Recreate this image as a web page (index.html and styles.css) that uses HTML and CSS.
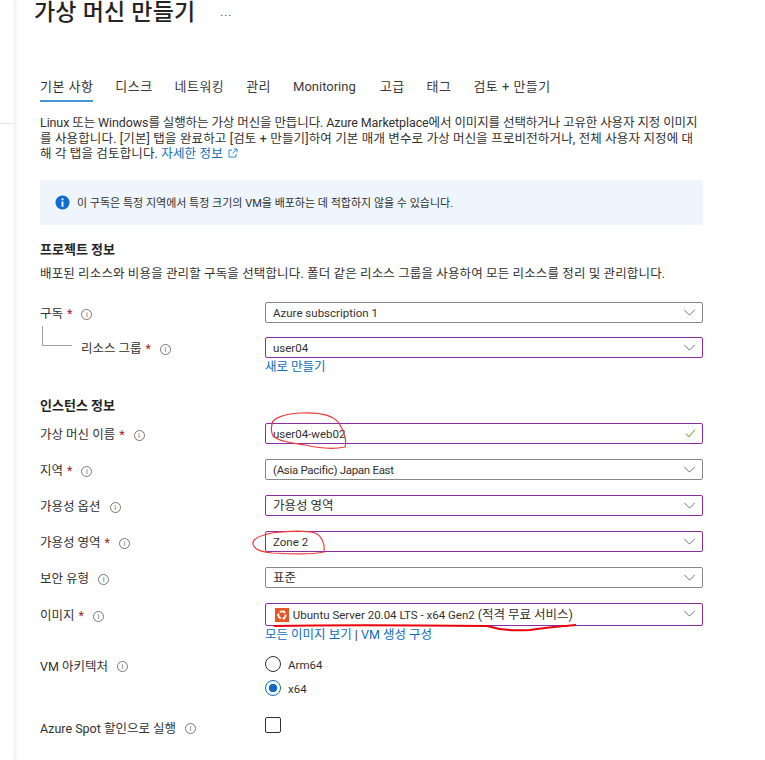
FILE: index.html
```html
<!DOCTYPE html>
<html lang="ko">
<head>
    <meta charset="UTF-8">
    <title>가상 머신 만들기</title>
    <link rel="stylesheet" href="styles.css">
</head>
<body>

<div class="side"><div class="side-line"></div></div>

<div class="blade">
    <div class="title-row">
        <h1>가상 머신 만들기</h1>
        <span class="more">...</span>
    </div>

    <div class="tabs">
        <span class="tab active">기본 사항</span>
        <span class="tab">디스크</span>
        <span class="tab">네트워킹</span>
        <span class="tab">관리</span>
        <span class="tab latin">Monitoring</span>
        <span class="tab">고급</span>
        <span class="tab">태그</span>
        <span class="tab">검토 + 만들기</span>
    </div>

    <p class="intro">Linux 또는 Windows를 실행하는 가상 머신을 만듭니다. Azure Marketplace에서 이미지를 선택하거나 고유한 사용자 지정 이미지<br>를 사용합니다. [기본] 탭을 완료하고 [검토 + 만들기]하여 기본 매개 변수로 가상 머신을 프로비전하거나, 전체 사용자 지정에 대<br>해 각 탭을 검토합니다. <a class="link">자세한 정보 <svg class="ext" viewBox="0 0 10 10"><path d="M4 2H1v7h7V6M5.5 1H9v3.5M9 1L4.5 5.5" fill="none" stroke="#0078d4" stroke-width="0.8"/></svg></a></p>

    <div class="notice">
        <svg class="notice-icon" viewBox="0 0 16 16"><circle cx="8" cy="8" r="7.5" fill="#0f6cd0"/><rect x="7" y="7" width="2" height="5.5" fill="#fff"/><rect x="7" y="3.6" width="2" height="2" fill="#fff"/></svg>
        <span>이 구독은 특정 지역에서 특정 크기의 VM을 배포하는 데 적합하지 않을 수 있습니다.</span>
    </div>

    <h2 class="section first">프로젝트 정보</h2>
    <p class="section-text">배포된 리소스와 비용을 관리할 구독을 선택합니다. 폴더 같은 리소스 그룹을 사용하여 모든 리소스를 정리 및 관리합니다.</p>

    <div class="row top">
        <div class="label">구독<b>*</b><i class="info">i</i></div>
        <div class="select">Azure subscription 1<svg class="chev" viewBox="0 0 14 8"><path d="M1 1l6 6 6-6"/></svg></div>
    </div>
    <div class="row sub">
        <div class="label nested"><span class="tree"></span>리소스 그룹<b>*</b><i class="info">i</i></div>
        <div class="select edited">user04<svg class="chev" viewBox="0 0 14 8"><path d="M1 1l6 6 6-6"/></svg></div>
    </div>
    <a class="link under">새로 만들기</a>

    <h2 class="section second">인스턴스 정보</h2>

    <div class="row first-row">
        <div class="label">가상 머신 이름<b>*</b><i class="info">i</i></div>
        <div class="select edited">user04-web02<svg class="check" viewBox="0 0 12 10"><path d="M1 5.5l3.2 3L11 1"/></svg></div>
    </div>
    <div class="row">
        <div class="label">지역<b>*</b><i class="info">i</i></div>
        <div class="select tight">(Asia Pacific) Japan East<svg class="chev" viewBox="0 0 14 8"><path d="M1 1l6 6 6-6"/></svg></div>
    </div>
    <div class="row">
        <div class="label">가용성 옵션<i class="info">i</i></div>
        <div class="select edited"><span class="ko">가용성 영역</span><svg class="chev" viewBox="0 0 14 8"><path d="M1 1l6 6 6-6"/></svg></div>
    </div>
    <div class="row">
        <div class="label">가용성 영역<b>*</b><i class="info">i</i></div>
        <div class="select edited">Zone 2<svg class="chev" viewBox="0 0 14 8"><path d="M1 1l6 6 6-6"/></svg></div>
    </div>
    <div class="row">
        <div class="label">보안 유형<i class="info">i</i></div>
        <div class="select"><span class="ko">표준</span><svg class="chev" viewBox="0 0 14 8"><path d="M1 1l6 6 6-6"/></svg></div>
    </div>
    <div class="row">
        <div class="label">이미지<b>*</b><i class="info">i</i></div>
        <div class="select edited image">
            <svg class="ubuntu" viewBox="0 0 14 14"><rect width="14" height="14" fill="#e95420"/><circle cx="7" cy="7" r="3.6" fill="none" stroke="#fff" stroke-width="1.8" stroke-dasharray="5.8 1.7" stroke-dashoffset="0.8"/><circle cx="2.8" cy="7" r="1" fill="#fff"/><circle cx="9.1" cy="3.4" r="1" fill="#fff"/><circle cx="9.1" cy="10.6" r="1" fill="#fff"/></svg>
            Ubuntu Server 20.04 LTS - x64 Gen2 <span class="ko">(적격 무료 서비스)</span><svg class="chev" viewBox="0 0 14 8"><path d="M1 1l6 6 6-6"/></svg>
        </div>
    </div>
    <div class="under links"><a class="link">모든 이미지 보기</a> <span class="pipe">|</span> <a class="link">VM 생성 구성</a></div>

    <div class="row arch">
        <div class="label">VM 아키텍처<i class="info">i</i></div>
        <div class="radios">
            <div class="radio-row"><span class="radio"></span><span class="radio-text">Arm64</span></div>
            <div class="radio-row"><span class="radio on"></span><span class="radio-text">x64</span></div>
        </div>
    </div>
    <div class="row spot">
        <div class="label">Azure Spot 할인으로 실행<i class="info">i</i></div>
        <span class="checkbox"></span>
    </div>
</div>

<!-- red pen marks drawn on top of the screenshot -->
<svg class="marks" width="765" height="760" viewBox="0 0 765 760">
    <path d="M272 424C272 418 285 414 300 413C318 412 333 415 339 423C344 431 347 441 345 447C330 450 318 448 305 445C292 443 278 441 273 436C271 432 271 428 272 424Z"/>
    <path d="M272 533C262 535 252 538 253 544C254 550 262 552 272 553C290 554 315 554 324 552C325 544 322 536 315 533C305 530 288 531 272 533Z"/>
    <path class="thick" d="M274 626C320 625 400 625 487 626C500 630 515 631 530 630C545 628 555 627 563 626C568 626 572 625 576 625"/>
</svg>

</body>
</html>
```
FILE: styles.css
```css
* {
    box-sizing: border-box;
}
body {
    margin: 0;
    height: 760px;
    overflow: hidden;
    background: #fff;
    color: #323130;
    font-family: Roboto, "Noto Sans CJK KR", sans-serif;
    font-size: 12.5px;
}
.side {
    position: absolute;
    left: 0;
    top: 0;
    width: 15px;
    height: 760px;
    border-right: 1px solid #eee;
    box-shadow: 1px 0 3px rgba(0, 0, 0, 0.06);
}
.side-line {
    margin-top: 123px;
    height: 1px;
    background: #e4e4e4;
}
.blade {
    margin-left: 40px;
    width: 663px;
}
.title-row {
    display: flex;
    align-items: center;
    height: 26px;
    margin-left: -6px;
}
h1 {
    margin: 0;
    font-size: 23px;
    font-weight: 500;
    line-height: 26px;
    letter-spacing: 0.2px;
    color: #252423;
}
.more {
    margin-left: 25px;
    margin-top: -2px;
    font-size: 11px;
    color: #444;
    letter-spacing: 1px;
}
.tabs {
    display: flex;
    gap: 22px;
    margin-top: 48px;
    height: 28px;
    font-size: 13px;
    line-height: 26px;
}
.tab {
    color: #3b3a39;
    letter-spacing: 0.45px;
}
.tab.latin {
    letter-spacing: 0;
    margin-right: 2px;
}
.tab.active {
    border-bottom: 2px solid #4a95d6;
    color: #323130;
}
.intro {
    margin: 13px 0 0;
    line-height: 15.5px;
    letter-spacing: 0.15px;
    white-space: nowrap;
}
.intro::first-line {
    letter-spacing: -0.1px;
}
a.link, .link {
    color: #0f6cbd;
}
.ext {
    width: 10px;
    height: 10px;
    margin-left: 2px;
}
.notice {
    display: flex;
    align-items: center;
    height: 45px;
    margin-top: 18px;
    padding-left: 15px;
    background: #eef5fd;
    border-radius: 2px;
    font-size: 11px;
}
.notice-icon {
    width: 15px;
    height: 15px;
    margin-right: 7px;
}
.section {
    margin: 14px 0 0;
    height: 20px;
    font-size: 13px;
    font-weight: 700;
    line-height: 22px;
    color: #252423;
}
.section.second {
    margin-top: 19px;
}
.section-text {
    margin: 7px 0 0;
    line-height: 16px;
    letter-spacing: 0.13px;
    white-space: nowrap;
}
.row {
    display: grid;
    grid-template-columns: 225px 438px;
    align-items: center;
    margin-top: 15px;
}
.row.top {
    margin-top: 20px;
}
.row.first-row {
    margin-top: 8px;
}
.label {
    display: flex;
    align-items: center;
    padding-top: 4px;
    line-height: 16px;
}
.label b {
    margin-left: 4px;
    color: #a4262c;
    font-weight: 400;
}
.info {
    display: inline-block;
    width: 11px;
    height: 11px;
    margin-left: 9px;
    border: 1px solid #777;
    border-radius: 50%;
    font-size: 8px;
    font-style: normal;
    line-height: 9px;
    text-align: center;
    color: #777;
}
.select {
    position: relative;
    height: 21px;
    padding-left: 7px;
    border: 1px solid #8a8886;
    border-radius: 2px;
    font-size: 11.5px;
    line-height: 20px;
}
.select .ko {
    font-size: 12.5px;
}
.select.tight {
    letter-spacing: -0.3px;
}
.select.edited {
    border-color: #8a2da5;
}
.chev {
    position: absolute;
    right: 6px;
    top: 6px;
    width: 13px;
    height: 7px;
    fill: none;
    stroke: #605e5c;
    stroke-width: 1;
}
.check {
    position: absolute;
    right: 6px;
    top: 5px;
    width: 11px;
    height: 9px;
    fill: none;
    stroke: #7fba50;
    stroke-width: 1.2;
}
.row.sub {
    margin-top: 14px;
}
.nested {
    position: relative;
    padding-left: 41px;
}
.tree {
    position: absolute;
    left: 2px;
    top: -11px;
    width: 30px;
    height: 20px;
    border-left: 1px solid #a19f9d;
    border-bottom: 1px solid #a19f9d;
}
.under {
    display: block;
    margin-left: 225px;
    line-height: 18px;
}
.pipe {
    color: #323130;
}
.image {
    height: 23px;
    padding-left: 9px;
    line-height: 21px;
}
.ubuntu {
    width: 14px;
    height: 14px;
    margin-right: 1px;
    vertical-align: -3px;
}
.row.arch {
    align-items: start;
    margin-top: 12px;
}
.row.arch .label {
    padding-top: 3px;
}
.radios {
    display: flex;
    flex-direction: column;
    gap: 8px;
}
.radio-row {
    display: flex;
    align-items: center;
    gap: 7px;
    height: 16px;
    font-size: 11.5px;
}
.radio-text {
    margin-top: 2px;
}
.radio {
    width: 16px;
    height: 16px;
    border: 1px solid #323130;
    border-radius: 50%;
}
.radio.on {
    border-color: #0f6cbd;
    background: radial-gradient(circle, #0f6cbd 0 4px, #fff 4.5px);
}
.row.spot {
    align-items: start;
    margin-top: 21px;
}
.checkbox {
    display: block;
    width: 16px;
    height: 16px;
    border: 1px solid #323130;
    border-radius: 2px;
}
.marks {
    position: absolute;
    left: 0;
    top: 0;
    pointer-events: none;
}
.marks path {
    fill: none;
    stroke: #f03a3a;
    stroke-width: 1.2;
}
.marks path.thick {
    stroke: #e8000b;
    stroke-width: 2;
}
```
